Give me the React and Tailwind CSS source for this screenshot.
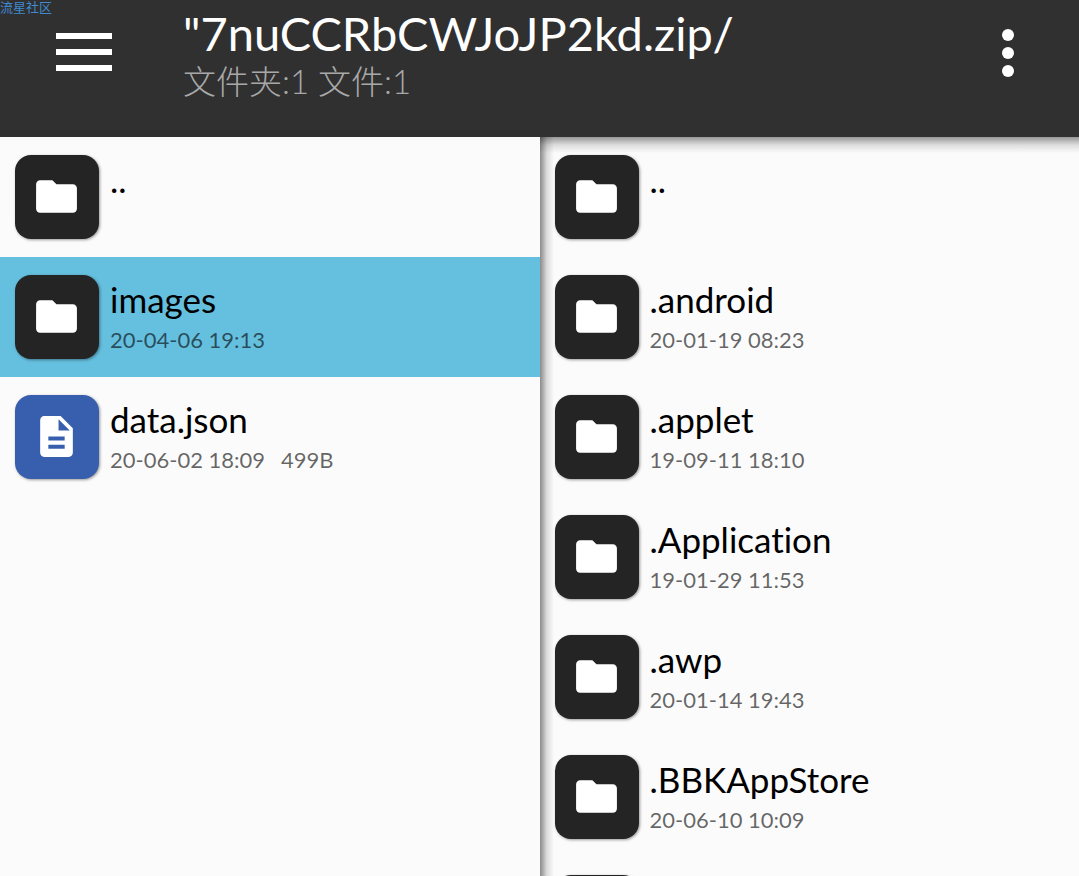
import React, { useState } from "react";
import clsx from "clsx";

const ARCHIVE_ENTRIES = [
  { name: "..", type: "folder" },
  { name: "images", type: "folder", date: "20-04-06 19:13" },
  { name: "data.json", type: "file", date: "20-06-02 18:09", size: "499B" }
];

const STORAGE_ENTRIES = [
  { name: "..", type: "folder" },
  { name: ".android", type: "folder", date: "20-01-19 08:23" },
  { name: ".applet", type: "folder", date: "19-09-11 18:10" },
  { name: ".Application", type: "folder", date: "19-01-29 11:53" },
  { name: ".awp", type: "folder", date: "20-01-14 19:43" },
  { name: ".BBKAppStore", type: "folder", date: "20-06-10 10:09" },
  { name: "", type: "folder" }
];

function FolderIcon() {
  return (
    <svg viewBox="0 0 24 24" className="mr-px mb-px size-[49px] fill-white" aria-hidden="true">
      <path d="M10 4H4c-1.1 0-1.99.9-1.99 2L2 18c0 1.1.9 2 2 2h16c1.1 0 2-.9 2-2V8c0-1.1-.9-2-2-2h-8l-2-2z" />
    </svg>
  );
}

function FileIcon() {
  return (
    <svg viewBox="0 0 24 24" className="mr-px mb-px size-[49px] fill-white" aria-hidden="true">
      <path d="M14 2H6c-1.1 0-1.99.9-1.99 2L4 20c0 1.1.89 2 1.99 2H18c1.1 0 2-.9 2-2V8l-6-6zm2 16H8v-2h8v2zm0-4H8v-2h8v2zm-3-5V3.5L18.5 9H13z" />
    </svg>
  );
}

function EntryRow({ entry, selected, onSelect }) {
  return (
    <li>
      <button
        type="button"
        onClick={onSelect}
        className={clsx(
          "flex h-[120px] w-full items-start pt-[18px] pl-[15px] text-left",
          selected && "bg-[#65bfde]"
        )}
      >
        <span
          className={clsx(
            "flex size-[84px] shrink-0 items-center justify-center rounded-2xl shadow-[1px_1px_3px_rgba(0,0,0,0.4)]",
            entry.type === "folder" ? "bg-[#242424]" : "bg-[#385fae]"
          )}
        >
          {entry.type === "folder" ? <FolderIcon /> : <FileIcon />}
        </span>

        <span className="ml-[11px] flex min-w-0 flex-col pt-[2px]">
          <span className="truncate text-[35px] leading-[44px] text-black">{entry.name}</span>
          {entry.date && (
            <span className="flex gap-4 text-[22px] leading-[38px] text-black/60">
              <span>{entry.date}</span>
              {entry.size && <span>{entry.size}</span>}
            </span>
          )}
        </span>
      </button>
    </li>
  );
}

function FilePane({ label, entries, initial, className }) {
  const [selected, setSelected] = useState(initial);

  return (
    <section aria-label={label} className={clsx("min-w-0 overflow-hidden", className)}>
      <ul>
        {entries.map((entry) => (
          <EntryRow
            key={entry.name}
            entry={entry}
            selected={selected === entry.name}
            onSelect={() => setSelected(entry.name)}
          />
        ))}
      </ul>
    </section>
  );
}

export default function App() {
  return (
    <div className="relative flex h-screen flex-col overflow-hidden bg-[#fbfbfb] font-['Lato','Noto_Sans_CJK_SC',sans-serif] [font-variant-ligatures:none]">
      {/* Community tag */}
      <span className="absolute top-0 left-0 text-[13px] leading-[14px] text-[#3f8ad0]">
        流星社区
      </span>

      {/* Toolbar */}
      <header className="flex h-[137px] shrink-0 items-start bg-[#303030]">
        <button
          type="button"
          aria-label="Menu"
          className="mt-[33px] ml-14 flex w-14 shrink-0 flex-col gap-[10px]"
        >
          <span className="h-[6px] bg-white"></span>
          <span className="h-[6px] bg-white"></span>
          <span className="h-[6px] bg-white"></span>
        </button>

        <div className="ml-[71px] min-w-0 flex-1 pt-1">
          <h1 className="truncate text-[47px] leading-[58px] text-white">
            "7nuCCRbCWJoJP2kd.zip/
          </h1>
          <p className="text-[33px] leading-[38px] font-light text-[#a8a8a8]">文件夹:1 文件:1</p>
        </div>

        <button
          type="button"
          aria-label="More options"
          className="mt-[29px] mr-[65px] flex shrink-0 flex-col gap-[6px]"
        >
          <span className="size-3 rounded-full bg-white"></span>
          <span className="size-3 rounded-full bg-white"></span>
          <span className="size-3 rounded-full bg-white"></span>
        </button>
      </header>

      {/* Panes */}
      <main className="grid min-h-0 flex-1 grid-cols-2">
        <FilePane label="Archive" entries={ARCHIVE_ENTRIES} initial="images" />
        <FilePane
          label="Storage"
          entries={STORAGE_ENTRIES}
          className="bg-[linear-gradient(to_right,rgba(0,0,0,0.45),rgba(0,0,0,0.12)_7px,transparent_14px),linear-gradient(to_bottom,rgba(0,0,0,0.4),rgba(0,0,0,0.12)_8px,transparent_16px)]"
        />
      </main>
    </div>
  );
}
